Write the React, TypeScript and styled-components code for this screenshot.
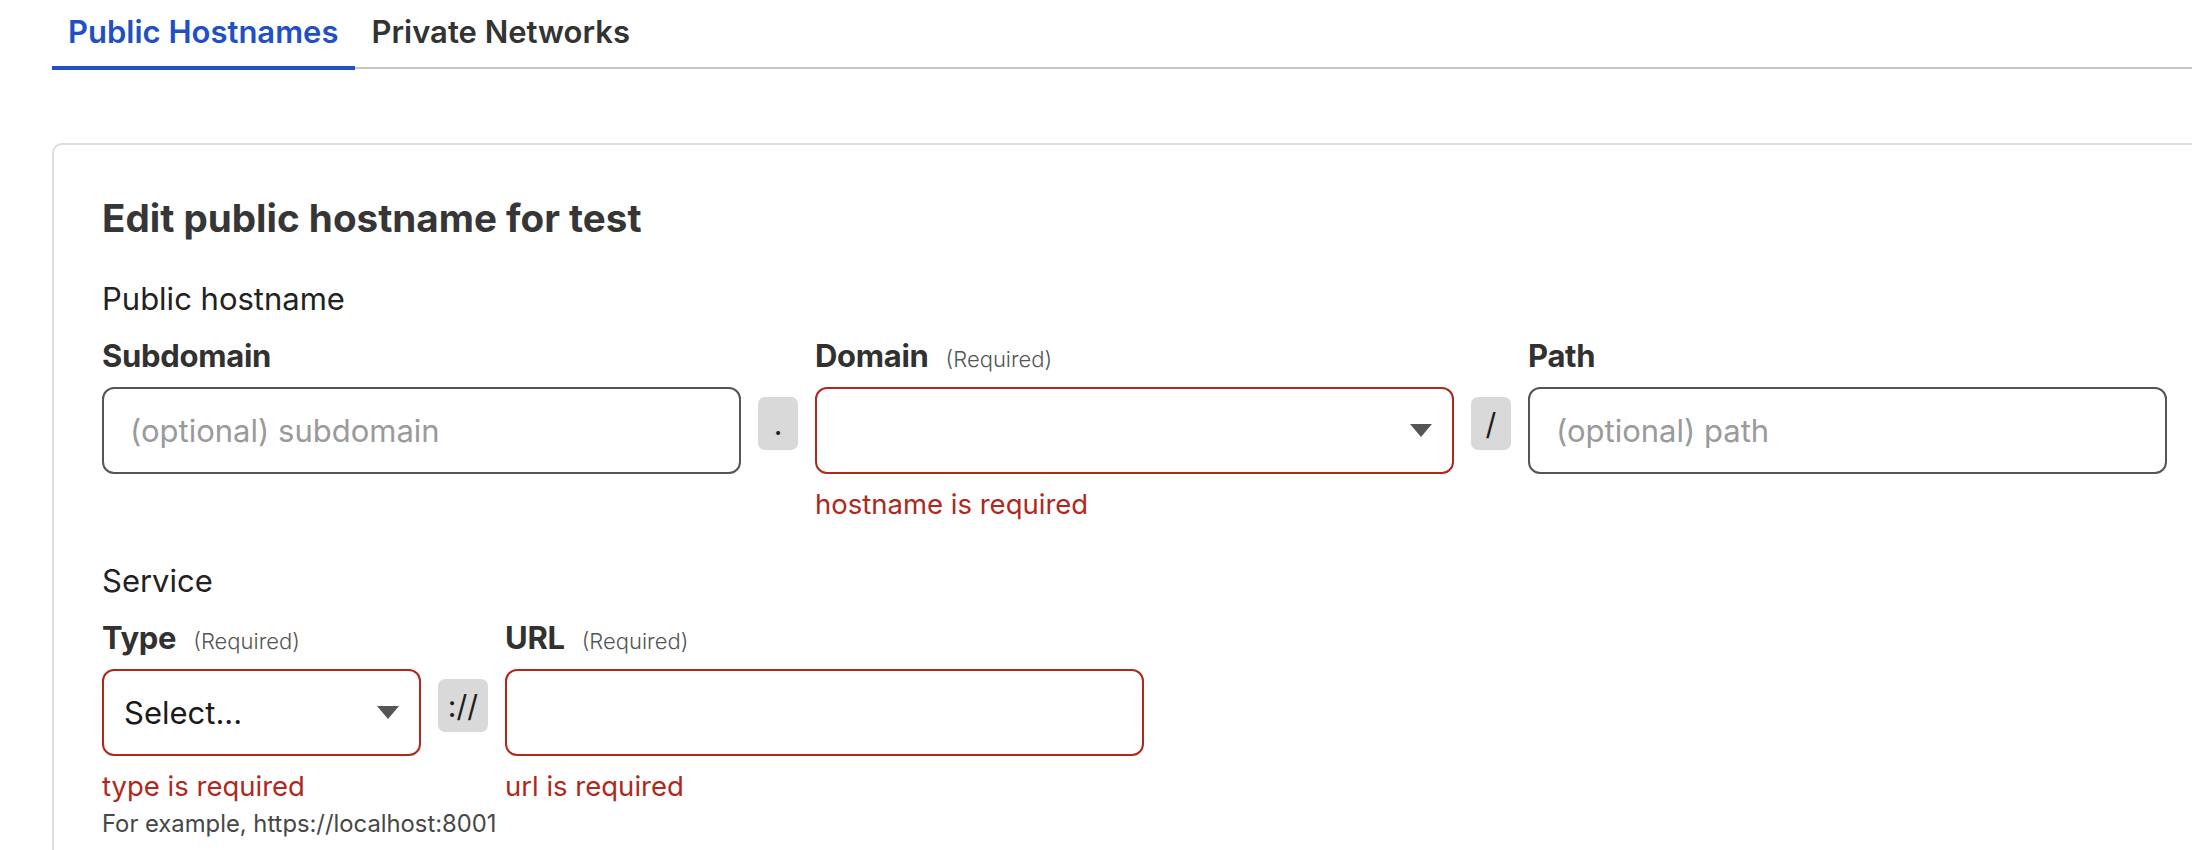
import React from "react"
import styled, { createGlobalStyle } from "styled-components"

const GlobalStyle = createGlobalStyle`
    html, body {
        margin: 0;
        padding: 0;
        background: #ffffff;
        overflow: hidden;
    }
    body {
        font-family: Inter, "Liberation Sans", sans-serif;
        color: #222222;
    }
    * {
        box-sizing: border-box;
    }
`

const Page = styled.div`
    width: 2192px;
    height: 850px;
    overflow: hidden;
`

const TabBar = styled.div`
    display: flex;
    margin-left: 52px;
    border-bottom: 2px solid #c6c6c6;
`

const Tab = styled.div<{ $active?: boolean }>`
    padding: 12px 17px 14px 16px;
    margin-bottom: -3px;
    font-size: 31px;
    line-height: 40px;
    font-weight: 600;
    color: ${({ $active }) => ($active ? "#1f50c4" : "#333333")};
    border-bottom: 4px solid ${({ $active }) => ($active ? "#1f50c4" : "transparent")};
`

const Card = styled.div`
    margin: 74px 0 0 52px;
    width: 2300px;
    height: 900px;
    border: 2px solid #dedede;
    border-radius: 10px;
    padding: 49px 48px;
`

const Heading = styled.h2`
    margin: 0;
    font-size: 38.6px;
    line-height: 48px;
    font-weight: 700;
    color: #363636;
`

const SectionTitle = styled.div`
    margin-top: 35px;
    font-size: 31px;
    line-height: 44px;
    color: #222222;
`

const FieldRow = styled.div`
    display: flex;
    align-items: flex-start;
    gap: 17px;
    padding-top: 13px;
`

const Field = styled.div<{ $width: number }>`
    display: flex;
    flex-direction: column;
    width: ${({ $width }) => $width}px;
`

const Label = styled.div`
    display: flex;
    align-items: baseline;
    height: 44px;
    line-height: 44px;
    font-size: 31px;
    font-weight: 700;
    color: #313131;
    letter-spacing: -0.3px;
`

const Required = styled.span`
    margin-left: 17px;
    font-size: 22px;
    font-weight: 300;
    color: #555555;
    letter-spacing: 0;
`

const TextInput = styled.input<{ $error?: boolean }>`
    margin-top: 9px;
    height: 87px;
    width: 100%;
    padding: 0 26px;
    border: 2px solid ${({ $error }) => ($error ? "#b0281c" : "#555555")};
    border-radius: 12px;
    font-family: Inter, "Liberation Sans", sans-serif;
    font-size: 31px;
    color: #222222;
    background: #ffffff;
    outline: none;

    &::placeholder {
        color: #9a9a9a;
    }
`

const SelectBox = styled.div<{ $error?: boolean }>`
    margin-top: 9px;
    height: 87px;
    display: flex;
    align-items: center;
    justify-content: space-between;
    padding: 0 20px 0 20px;
    border: 2px solid ${({ $error }) => ($error ? "#b0281c" : "#555555")};
    border-radius: 12px;
    font-size: 31px;
    color: #1a1a1a;
`

const Caret = styled.span`
    width: 0;
    height: 0;
    margin-left: auto;
    border-left: 11px solid transparent;
    border-right: 11px solid transparent;
    border-top: 13px solid #555555;
`

const Separator = styled.div<{ $width: number }>`
    margin-top: 63px;
    width: ${({ $width }) => $width}px;
    height: 53px;
    flex-shrink: 0;
    display: flex;
    align-items: center;
    justify-content: center;
    background: #d9d9d9;
    border-radius: 7px;
    font-size: 30px;
    color: #1e1e1e;
`

const ErrorText = styled.div`
    margin-top: 10px;
    font-size: 27.5px;
    line-height: 40px;
    color: #b0281c;
    white-space: nowrap;
`

const Hint = styled.div`
    margin-top: 6px;
    font-size: 23.8px;
    line-height: 24px;
    color: #474747;
    white-space: nowrap;
`

type LabelProps = { text: string; required?: boolean }

const FieldLabel = ({ text, required }: LabelProps) => (
    <Label>
        {text}
        {required && <Required>(Required)</Required>}
    </Label>
)

export default function App() {
    return (
        <Page>
            <GlobalStyle />
            <TabBar>
                <Tab $active>Public Hostnames</Tab>
                <Tab>Private Networks</Tab>
            </TabBar>
            <Card>
                <Heading>Edit public hostname for test</Heading>

                <SectionTitle>Public hostname</SectionTitle>
                <FieldRow>
                    <Field $width={639}>
                        <FieldLabel text="Subdomain" />
                        <TextInput placeholder="(optional) subdomain" />
                    </Field>
                    <Separator $width={40}>.</Separator>
                    <Field $width={639}>
                        <FieldLabel text="Domain" required />
                        <SelectBox $error>
                            <Caret />
                        </SelectBox>
                        <ErrorText>hostname is required</ErrorText>
                    </Field>
                    <Separator $width={40}>/</Separator>
                    <Field $width={639}>
                        <FieldLabel text="Path" />
                        <TextInput placeholder="(optional) path" />
                    </Field>
                </FieldRow>

                <SectionTitle>Service</SectionTitle>
                <FieldRow>
                    <Field $width={319}>
                        <FieldLabel text="Type" required />
                        <SelectBox $error>
                            Select...
                            <Caret />
                        </SelectBox>
                        <ErrorText>type is required</ErrorText>
                        <Hint>For example, https://localhost:8001</Hint>
                    </Field>
                    <Separator $width={50}>://</Separator>
                    <Field $width={639}>
                        <FieldLabel text="URL" required />
                        <TextInput $error />
                        <ErrorText>url is required</ErrorText>
                    </Field>
                </FieldRow>
            </Card>
        </Page>
    )
}
